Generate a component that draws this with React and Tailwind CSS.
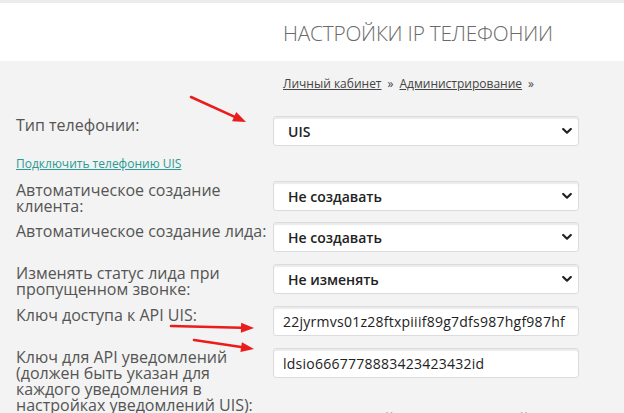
import React from "react";

function Chevron() {
  return (
    <svg width="10" height="7" viewBox="0 0 10 7" className="absolute right-[6px] top-1/2 -translate-y-1/2">
      <polyline points="1.2,1.5 5,5.2 8.8,1.5" fill="none" stroke="#222" strokeWidth="2.2" strokeLinecap="round" strokeLinejoin="round" />
    </svg>
  );
}

function Select({ value }) {
  return (
    <div className="relative shrink-0 h-[30px] w-[306px] rounded-[3px] border border-[#dcdcdc] bg-white shadow-[inset_0_2px_1px_rgba(0,0,0,0.08)] flex items-center pl-[14px] text-[14px] font-semibold text-[#222]">
      {value}
      <Chevron />
    </div>
  );
}

function Input({ value }) {
  return (
    <div className="shrink-0 h-[30px] w-[306px] rounded-[3px] border border-[#dcdcdc] bg-white shadow-[inset_0_2px_1px_rgba(0,0,0,0.08)] flex items-center pl-[9px] text-[14px] font-medium text-[#222] overflow-hidden whitespace-nowrap tracking-[0.25px]">
      {value}
    </div>
  );
}

function Row({ label, children, className = "" }) {
  return (
    <div className={"flex h-[30px] " + className}>
      <div className="w-[273px] shrink-0 pl-[16px] text-[16px] leading-[16px] text-[#555] pt-[1px]">{label}</div>
      {children}
    </div>
  );
}

function Arrow({ x1, y1, x2, y2 }) {
  const dx = x2 - x1, dy = y2 - y1;
  const len = Math.sqrt(dx * dx + dy * dy);
  const ux = dx / len, uy = dy / len;
  const hl = 13, hw = 5;
  const bx = x2 - ux * hl, by = y2 - uy * hl;
  const p1 = `${bx - uy * hw},${by + ux * hw}`;
  const p2 = `${bx + uy * hw},${by - ux * hw}`;
  return (
    <g>
      <line x1={x1} y1={y1} x2={bx} y2={by} stroke="#ea1c1c" strokeWidth="2.6" strokeLinecap="round" />
      <polygon points={`${x2},${y2} ${p1} ${p2}`} fill="#ea1c1c" />
    </g>
  );
}

export default function App() {
  return (
    <div className="relative w-[624px] h-[413px] overflow-hidden bg-[#f2f3f2]" style={{ fontFamily: '"Open Sans", "Noto Sans", sans-serif' }}>
      <div className="h-[61px] bg-white border-t-[3px] border-[#ececec] pl-[283px] pt-[18px]">
        <div className="text-[20.8px] font-light text-[#6a6a6a] leading-[24px] tracking-[-0.2px]">НАСТРОЙКИ IP ТЕЛЕФОНИИ</div>
      </div>
      <div className="pl-[283px] pt-[15px] text-[12px] leading-[16px] text-[#444]">
        <span className="underline">Личный кабинет</span>
        <span className="mx-[6px]">»</span>
        <span className="underline">Администрирование</span>
        <span className="ml-[6px]">»</span>
      </div>
      <div className="flex flex-col mt-[24px]">
        <Row label="Тип телефонии:">
          <Select value="UIS" />
        </Row>
        <div className="pl-[16px] mt-[11px] text-[12px] leading-[14px] text-[#2a9a94] underline">Подключить телефонию UIS</div>
        <Row label={<>Автоматическое создание<br />клиента:</>} className="mt-[10px]">
          <Select value="Не создавать" />
        </Row>
        <Row label="Автоматическое создание лида:" className="mt-[11px]">
          <Select value="Не создавать" />
        </Row>
        <Row label={<>Изменять статус лида при<br />пропущенном звонке:</>} className="mt-[12px]">
          <Select value="Не изменять" />
        </Row>
        <Row label="Ключ доступа к API UIS:" className="mt-[12px]">
          <Input value="22jyrmvs01z28ftxpiiif89g7dfs987hgf987hf" />
        </Row>
        <Row label={<>Ключ для API уведомлений<br />(должен быть указан для<br />каждого уведомления в<br />настройках уведомлений UIS):</>} className="mt-[12px]">
          <div className="flex flex-col">
            <Input value="ldsio6667778883423423432id" />
            <div className="mt-[33px] text-[16px] leading-[16px] text-[#555] whitespace-nowrap">Максимальный номер значений ответственный</div>
          </div>
        </Row>
      </div>
      <svg className="absolute left-0 top-0 pointer-events-none" width="624" height="413">
        <Arrow x1={191} y1={97} x2={246} y2={122} />
        <Arrow x1={171} y1={326} x2={254} y2={328} />
        <Arrow x1={194} y1={340} x2={254} y2={349} />
      </svg>
    </div>
  );
}
